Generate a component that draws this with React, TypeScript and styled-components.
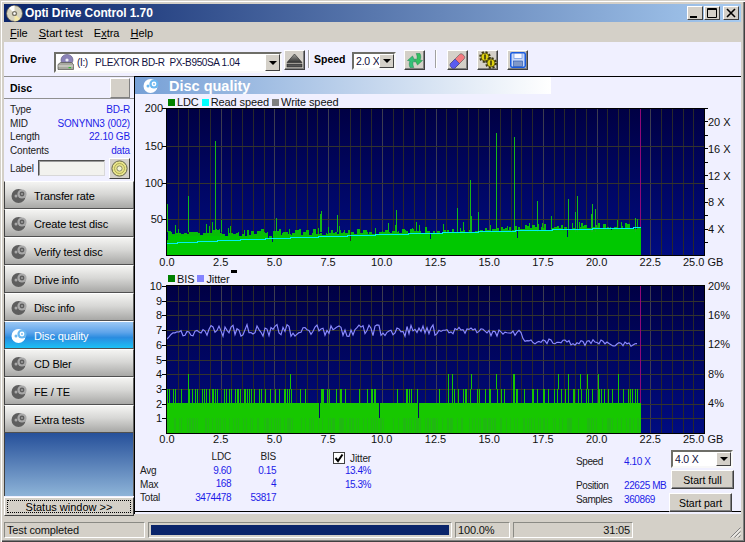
import React from "react";
import styled, { createGlobalStyle } from "styled-components";

const GlobalStyle = createGlobalStyle`
  html, body {
    margin: 0;
    padding: 0;
    background: #d4d0c8;
  }
  * {
    box-sizing: border-box;
  }
`;

const FONT = `"Liberation Sans", Arial, sans-serif`;
const PANEL = "#f0f0ff";
const FACE = "#d4d0c8";
const VALUE_BLUE = "#1c1ce8";

const seeded = (start: number) => {
    let seed = start;
    return () => {
        seed = (seed * 16807) % 2147483647;
        return seed / 2147483647;
    };
};

const PLOT_LEFT = 167;
const PLOT_RIGHT = 704;
const DATA_END = 641;
const GB_PX = (PLOT_RIGHT - PLOT_LEFT) / 25;

// ---- LDC data, page coordinates
const LDC_SPIKES: [number, number][] = [
    [167, 204], [188, 196], [215, 141], [221, 220], [276, 218], [320, 214], [321, 211], [337, 215],
    [396, 210], [388, 223], [457, 208], [470, 180], [471, 216], [478, 212], [496, 133], [514, 137],
    [537, 201], [568, 199], [577, 196], [575, 212], [592, 204], [595, 209], [591, 214], [635, 218],
];

const READ_SPEED: [number, number][] = [
    [167, 243], [177, 242], [197, 241], [217, 240], [240, 239], [265, 238], [290, 237], [318, 236],
    [347, 235], [375, 234], [408, 233], [442, 232], [478, 231], [515, 230], [552, 229], [592, 228], [633, 227],
];

const buildLdc = () => {
    const rand = seeded(4711);
    let base = "";
    let rough = "";
    let x = PLOT_LEFT;
    while (x < DATA_END) {
        const t = (x - PLOT_LEFT) / (DATA_END - PLOT_LEFT);
        const baseTop = Math.round(t < 0.35 ? 236 : 236 - (t - 0.35) * 11);
        const r = rand();
        const v = rand();
        if (r < 0.04) {
            // a single dark gap in the fill
            base += `M${x + 0.5} ${baseTop + 1 + Math.round(v * 5)}V255`;
            x++;
            continue;
        }
        const run = 1 + Math.floor(rand() * 3);
        const tall = r > 0.82 ? 16 : 7;
        const top = baseTop - Math.round(v * tall);
        for (let i = 0; i < run && x < DATA_END; i++, x++) {
            base += `M${x + 0.5} ${baseTop}V255`;
            rough += `M${x + 0.5} ${i === 0 || tall < 16 ? top : baseTop - 3}V${baseTop}`;
        }
    }
    const spikes = LDC_SPIKES.map(([sx, y]) => `M${sx + 0.5} ${y}V232`).join("");
    return {base, rough, spikes};
};

const speedLine = () => {
    let d = `M${READ_SPEED[0][0]} ${READ_SPEED[0][1]}`;
    READ_SPEED.forEach(([x, y]) => {
        d += `H${x}V${y}`;
    });
    return d + `H${DATA_END}`;
};

// ---- BIS and jitter data
const BIS_3_LEFT = [112, 118, 130, 136, 152, 175, 178, 185, 196, 200, 216, 222, 228, 238, 246, 250, 255, 262, 283, 288, 298, 304, 316, 320, 324, 330, 342, 346, 352, 358, 364, 372, 388, 392, 406, 420, 434, 446, 462, 466, 470, 478, 482, 510, 526, 572, 576, 580, 590, 596, 618, 630, 634, 644, 686, 712, 722, 726, 732, 736, 802, 828, 832, 838, 842, 862];
const BIS_3_RIGHT = [28, 55, 65, 72, 85, 100, 104, 108, 120, 142, 148, 165, 178, 180, 200, 212, 222, 248, 252, 258, 262, 282, 305, 310, 322, 338, 342, 355, 372, 380, 392, 405, 415, 428, 432, 445, 452, 468, 475, 485, 503, 508, 513, 522, 535, 545, 565, 578, 595, 600, 605, 615, 622];
const BIS_4 = [...[175, 481].map(z => 130 + z / 3), ...[55, 65, 122, 199, 250, 253, 385, 415, 451, 472, 505, 565].map(z => 430 + z / 3)];
const BIS_NOTCH = [568, 748, 865].map(z => 130 + z / 3);

const buildBis = () => {
    const rand = seeded(99);
    const three = [...BIS_3_LEFT.map(z => 130 + z / 3), ...BIS_3_RIGHT.map(z => 430 + z / 3)]
        .map(x => `M${Math.round(x) + 0.5} 389V404`).join("");
    const four = BIS_4.map(x => `M${Math.round(x) + 0.5} 374V389`).join("");
    const notches = BIS_NOTCH.map(x => `M${Math.round(x) + 0.5} 403V418`).join("");
    let stripes = "";
    for (let x = PLOT_LEFT; x < DATA_END; x++) {
        if (rand() < 0.35) stripes += `M${x + 0.5} 418V433`;
    }
    return {three, four, notches, stripes};
};

const jitterLine = () => {
    const rand = seeded(2024);
    let d = "";
    for (let x = PLOT_LEFT; x < 639; x += 2) {
        let center: number;
        let amp: number;
        if (x < 172) {
            center = 340 - (x - PLOT_LEFT) * 1.3;
            amp = 1;
        } else if (x < 210) {
            center = 334 - (x - 172) * 0.05;
            amp = 3;
        } else if (x < 523) {
            center = 330.5 + (x > 440 ? (x - 440) * 0.03 : 0);
            amp = x > 440 ? 4 : 6;
        } else {
            center = 341 + (x - 523) * 0.024;
            amp = 3;
        }
        const y = center + (rand() * 2 - 1) * amp;
        d += `${d ? "L" : "M"}${x} ${y.toFixed(1)}`;
    }
    return d;
};

const LDC = buildLdc();
const BIS = buildBis();
const SPEED_PATH = speedLine();
const JITTER_PATH = jitterLine();

// ---- chart drawing
type PlotProps = {
    id: string;
    top: number;
    bottom: number;
    rows: number[];
    labelY: number;
    children: React.ReactNode;
};

const X_LABELS = ["0.0", "2.5", "5.0", "7.5", "10.0", "12.5", "15.0", "17.5", "20.0", "22.5"];

function Plot({id, top, bottom, rows, labelY, children}: PlotProps) {
    const columns = Array.from({length: 49}, (_, i) => Math.round(PLOT_LEFT + (i + 1) * GB_PX / 2));
    return (
        <>
            <defs>
                <linearGradient id={id} x1="0" y1="0" x2="0" y2="1">
                    <stop offset="0" stopColor="#000044"/>
                    <stop offset="1" stopColor="#000c80"/>
                </linearGradient>
            </defs>
            <rect x={PLOT_LEFT} y={top} width={PLOT_RIGHT - PLOT_LEFT} height={bottom - top} fill={`url(#${id})`}/>
            {columns.map((x, i) => (
                <path key={x} d={`M${x + 0.5} ${top}V${bottom}`} stroke={(i + 1) % 5 === 0 ? "#3c3c50" : "#28282c"}/>
            ))}
            {rows.map(y => (
                <path key={y} d={`M${PLOT_LEFT} ${y + 0.5}H${PLOT_RIGHT}`} stroke="#33332e"/>
            ))}
            <path d={`M640.5 ${top}V${bottom}`} stroke="#900878"/>
            {children}
            <path d={`M166.5 ${top - 0.5}H704.5V${bottom + 0.5}H166.5Z`} fill="none" stroke="#000"/>
            {X_LABELS.map((label, i) => (
                <text key={label} x={PLOT_LEFT + i * 2.5 * GB_PX} y={labelY} textAnchor="middle">{label}</text>
            ))}
            <text x={PLOT_RIGHT - 21} y={labelY}>25.0 GB</text>
        </>
    );
}

function LdcPlot() {
    const ticks = [[200, 108], [150, 146], [100, 183], [50, 219]];
    const speeds = [[20, 122], [16, 149], [12, 176], [8, 202], [4, 229]];
    const minor = Array.from({length: 11}, (_, i) => 242 - i * 13.4);
    return (
        <ChartSvg width={606} height={162} viewBox="135 108 606 162">
            <Plot id="ldcBack" top={109} bottom={255} rows={[146, 183, 219]} labelY={266}>
                <path d={LDC.base} stroke="#00c800"/>
                <path d={LDC.rough} stroke="#08bc08"/>
                <path d={LDC.spikes} stroke="#16b816"/>
                <path d={SPEED_PATH} fill="none" stroke="#00f0f0" strokeWidth={1}/>
            </Plot>
            {ticks.map(([value, y]) => (
                <g key={value}>
                    <path d={`M162 ${y + 0.5}H167`} stroke="#000"/>
                    <text x={163} y={y + 4} textAnchor="end">{value}</text>
                </g>
            ))}
            {minor.map(y => (
                <path key={y} d={`M704 ${Math.round(y) + 0.5}H708`} stroke="#000"/>
            ))}
            {speeds.map(([value, y]) => (
                <text key={value} x={708} y={y + 4}>{value} X</text>
            ))}
        </ChartSvg>
    );
}

function BisPlot() {
    const levels = [10, 9, 8, 7, 6, 5, 4, 3, 2, 1];
    const levelY = (value: number) => Math.round(286 + (10 - value) * 14.7);
    const percents = [[20, 286], [16, 315], [12, 344], [8, 374], [4, 403]];
    return (
        <ChartSvg width={606} height={161} viewBox="135 285 606 161">
            <Plot id="bisBack" top={286} bottom={433} rows={levels.slice(1).map(levelY)} labelY={443}>
                <rect x={PLOT_LEFT} y={403} width={DATA_END - PLOT_LEFT} height={30} fill="#17c800"/>
                <path d={BIS.stripes} stroke="#20b812"/>
                <path d={BIS.three} stroke="#18c400"/>
                <path d={BIS.four} stroke="#18c400"/>
                <path d={BIS.notches} stroke="#08086a"/>
                <path d={JITTER_PATH} fill="none" stroke="#8c8cff" strokeWidth={1.15} shapeRendering="auto"/>
            </Plot>
            {levels.map(value => (
                <g key={value}>
                    <path d={`M162 ${levelY(value) + 0.5}H167`} stroke="#000"/>
                    <text x={162} y={levelY(value) + 4} textAnchor="end">{value}</text>
                </g>
            ))}
            {percents.map(([value, y]) => (
                <text key={value} x={708} y={y + 4}>{value}%</text>
            ))}
        </ChartSvg>
    );
}

// ---- icons
function AppDisc() {
    return (
        <svg width="17" height="17" viewBox="0 0 17 17">
            <circle cx="8.5" cy="8.5" r="8" fill="#d8d4c0" stroke="#5a5648" strokeWidth="0.8"/>
            <path d="M8.5 8.5L3 3A8 8 0 0 1 8.5 .5Z" fill="#fff"/>
            <path d="M8.5 8.5L14 14A8 8 0 0 1 8.5 16.5Z" fill="#f4e8a8"/>
            <circle cx="8.5" cy="8.5" r="2.6" fill="#7a7668"/>
            <circle cx="8.5" cy="8.5" r="1.2" fill="#fff"/>
        </svg>
    );
}

function DriveGlyph() {
    return (
        <svg width="17" height="17" viewBox="0 0 17 17">
            <ellipse cx="10" cy="6" rx="6" ry="5.6" fill="#8a82b8" stroke="#5c5880" strokeWidth="0.6"/>
            <circle cx="10" cy="6" r="1.6" fill="#eeeef8"/>
            <path d="M1 10.5L3.5 8.5H14.5L16.5 10.5V15.5H1Z" fill="#a8a8a0" stroke="#55554f" strokeWidth="0.7"/>
            <path d="M1.4 12H16.2" stroke="#e0e0d8"/>
            <rect x="11.5" y="13" width="2.5" height="1.2" fill="#30c030"/>
        </svg>
    );
}

function EjectGlyph() {
    return (
        <svg width="17" height="15" viewBox="0 0 17 15">
            <defs>
                <linearGradient id="ejectFill" x1="0" y1="0" x2="0" y2="1">
                    <stop offset="0" stopColor="#a0a09a"/>
                    <stop offset="1" stopColor="#303030"/>
                </linearGradient>
            </defs>
            <path d="M8.5 1L16 9.5H1Z" fill="url(#ejectFill)" stroke="#222" strokeWidth="0.6"/>
            <rect x="1" y="11" width="15" height="3" fill="#555" stroke="#222" strokeWidth="0.6"/>
        </svg>
    );
}

function RefreshGlyph() {
    return (
        <svg width="18" height="17" viewBox="0 0 18 17">
            <path d="M4 15.5C3 13 3 11 4 9L1.5 8.5L6.5 4L9.5 10L7.2 9.6C6.6 11.5 6.8 13.5 7.8 15.5Z" fill="#34c078" stroke="#1c8050" strokeWidth="0.5"/>
            <path d="M14 1.5C15 4 15 6 14 8L16.5 8.5L11.5 13L8.5 7L10.8 7.4C11.4 5.5 11.2 3.5 10.2 1.5Z" fill="#34c060" stroke="#1c8050" strokeWidth="0.5"/>
        </svg>
    );
}

function EraserGlyph() {
    return (
        <svg width="17" height="17" viewBox="0 0 17 17">
            <path d="M1.5 11.5L10.5 2.5C11.5 1.5 12.8 1.5 13.8 2.5L15 3.7C16 4.7 16 6 15 7L6 16C5 16.8 4 16.8 3 16Z" fill="#f47a80" stroke="#555" strokeWidth="0.6"/>
            <path d="M1.5 11.5L6 7L10.5 11.5L6 16C5 16.8 4 16.8 3 16L1.5 14.5C.8 13.6 .8 12.3 1.5 11.5Z" fill="#5a5cf0" stroke="#404080" strokeWidth="0.6"/>
        </svg>
    );
}

function GearsGlyph() {
    return (
        <svg width="18" height="18" viewBox="0 0 18 18">
            <circle cx="6" cy="6" r="4.6" fill="none" stroke="#3c3810" strokeWidth="2.6" strokeDasharray="2 1.6"/>
            <circle cx="6" cy="6" r="4" fill="#dcd010" stroke="#3c3810" strokeWidth="0.7"/>
            <rect x="5.2" y="3.5" width="1.6" height="5" fill="#3c3810"/>
            <circle cx="12" cy="12" r="4.6" fill="none" stroke="#3c3810" strokeWidth="2.6" strokeDasharray="2 1.6"/>
            <circle cx="12" cy="12" r="4" fill="#dcd010" stroke="#3c3810" strokeWidth="0.7"/>
            <rect x="11.2" y="9.5" width="1.6" height="5" fill="#3c3810"/>
        </svg>
    );
}

function SaveGlyph() {
    return (
        <svg width="16" height="16" viewBox="0 0 16 16">
            <rect x=".75" y=".75" width="14.5" height="14.5" rx="1.5" fill="#c8d8f8" stroke="#1a5ce0" strokeWidth="1.5"/>
            <rect x="4" y="1.5" width="8" height="5" fill="#f8f8ff" stroke="#5080d8" strokeWidth="0.6"/>
            <rect x="3.5" y="9" width="9" height="5.5" fill="#8098c8" stroke="#2050b0" strokeWidth="0.6"/>
        </svg>
    );
}

function YellowDisc() {
    return (
        <svg width="17" height="17" viewBox="0 0 17 17">
            <circle cx="8.5" cy="8.5" r="7.6" fill="#e8e48c" stroke="#66664a"/>
            <circle cx="8.5" cy="8.5" r="5" fill="none" stroke="#b0ac50"/>
            <circle cx="8.5" cy="8.5" r="2.6" fill="#f4f4d0" stroke="#66664a" strokeWidth="0.7"/>
        </svg>
    );
}

function NavDisc({$active}: {$active?: boolean}) {
    const dark = $active ? "#ffffff" : "#5e5e5e";
    const light = $active ? "#6cb8f0" : "#a8a8a8";
    return (
        <svg width="17" height="17" viewBox="0 0 17 17">
            <circle cx="7.5" cy="9" r="7" fill={dark}/>
            <circle cx="11" cy="7" r="4.6" fill={light}/>
            <circle cx="11" cy="7" r="2.4" fill={dark}/>
            <circle cx="11" cy="7" r="0.9" fill={light}/>
            <circle cx="5" cy="9" r="1.5" fill={light}/>
        </svg>
    );
}

// ---- content
const NAV_ITEMS = ["Transfer rate", "Create test disc", "Verify test disc", "Drive info", "Disc info", "Disc quality", "CD Bler", "FE / TE", "Extra tests"];

const DISC_INFO = [
    ["Type", "BD-R"],
    ["MID", "SONYNN3 (002)"],
    ["Length", "22.10 GB"],
    ["Contents", "data"],
];

export default function App() {
    return (
        <Window>
            <GlobalStyle/>
            <TitleBar>
                <AppDisc/>
                <TitleText>Opti Drive Control 1.70</TitleText>
                <CaptionButtons>
                    <CaptionButton aria-label="Minimize">
                        <svg width="14" height="12" viewBox="0 0 14 12"><rect x="2" y="9" width="7" height="2" fill="#000"/></svg>
                    </CaptionButton>
                    <CaptionButton aria-label="Maximize">
                        <svg width="14" height="12" viewBox="0 0 14 12"><path d="M2.5 1.5H11.5V10.5H2.5ZM2 2.5H12" fill="none" stroke="#000"/></svg>
                    </CaptionButton>
                    <CaptionButton $ml={2} aria-label="Close">
                        <svg width="14" height="12" viewBox="0 0 14 12"><path d="M3 2L11 10M11 2L3 10" fill="none" stroke="#000" strokeWidth="1.6"/></svg>
                    </CaptionButton>
                </CaptionButtons>
            </TitleBar>

            <MenuBar>
                <MenuItem><u>F</u>ile</MenuItem>
                <MenuItem><u>S</u>tart test</MenuItem>
                <MenuItem>E<u>x</u>tra</MenuItem>
                <MenuItem><u>H</u>elp</MenuItem>
            </MenuBar>

            <Toolbar>
                <ToolLabel $width={44}>Drive</ToolLabel>
                <Combo $width={228} $height={21} $mt={2}>
                    <ComboIcon><DriveGlyph/></ComboIcon>
                    <DriveText>{"(I:)   PLEXTOR BD-R  PX-B950SA 1.04"}</DriveText>
                    <ComboArrow/>
                </Combo>
                <ToolButton $ml={2} aria-label="Eject"><EjectGlyph/></ToolButton>
                <ToolDivider $ml={3}/>
                <ToolLabel $width={38} $ml={5}>Speed</ToolLabel>
                <Combo $width={44} $height={18} $mt={2}>
                    <ComboText>2.0 X</ComboText>
                    <ComboArrow/>
                </Combo>
                <ToolButton $ml={8} aria-label="Refresh"><RefreshGlyph/></ToolButton>
                <ToolDivider $ml={10}/>
                <ToolButton $ml={11} aria-label="Erase"><EraserGlyph/></ToolButton>
                <ToolButton $ml={9} aria-label="Settings"><GearsGlyph/></ToolButton>
                <ToolButton $ml={9} aria-label="Save"><SaveGlyph/></ToolButton>
            </Toolbar>

            <Body>
                <Sidebar>
                    <DiscHeader>
                        <DiscTitle>Disc</DiscTitle>
                        <DiscToggle aria-label="Toggle disc panel"/>
                    </DiscHeader>
                    <InfoList>
                        {DISC_INFO.map(([name, value]) => (
                            <InfoRow key={name}>
                                <span>{name}</span>
                                <InfoValue>{value}</InfoValue>
                            </InfoRow>
                        ))}
                        <LabelRow>
                            <LabelName>Label</LabelName>
                            <LabelInput/>
                            <LabelButton aria-label="Read label"><YellowDisc/></LabelButton>
                        </LabelRow>
                    </InfoList>
                    <NavList>
                        {NAV_ITEMS.map(item => (
                            <NavButton key={item} $active={item === "Disc quality"}>
                                <NavDisc $active={item === "Disc quality"}/>
                                {item}
                            </NavButton>
                        ))}
                    </NavList>
                    <SideFill/>
                    <StatusToggle><StatusFocus>{"Status window >>"}</StatusFocus></StatusToggle>
                </Sidebar>

                <Main>
                    <Banner>
                        <NavDisc $active/>
                        <BannerText>Disc quality</BannerText>
                    </Banner>
                    <Legend>
                        <Swatch $color="#008000"/>LDC
                        <Swatch $color="#00ffff" $ml={3}/>Read speed
                        <Swatch $color="#808080" $ml={3}/>Write speed
                    </Legend>
                    <LdcPlot/>
                    <Legend $tall>
                        <Swatch $color="#008000"/>BIS
                        <Swatch $color="#8484ff" $ml={3}/>Jitter
                        <LegendMark/>
                    </Legend>
                    <BisPlot/>

                    <StatsArea>
                        <StatsGrid>
                            <span/>
                            <StatHead>LDC</StatHead>
                            <StatHead>BIS</StatHead>
                            <span>Avg</span>
                            <StatValue>9.60</StatValue>
                            <StatValue>0.15</StatValue>
                            <span>Max</span>
                            <StatValue>168</StatValue>
                            <StatValue>4</StatValue>
                            <span>Total</span>
                            <StatValue>3474478</StatValue>
                            <StatValue>53817</StatValue>
                        </StatsGrid>
                        <JitterColumn>
                            <JitterHead>
                                <CheckBox>
                                    <svg width="10" height="10" viewBox="0 0 10 10"><path d="M1.5 5L4 8L8.5 1.5" fill="none" stroke="#000" strokeWidth="2"/></svg>
                                </CheckBox>
                                <span>Jitter</span>
                            </JitterHead>
                            <StatValue>13.4%</StatValue>
                            <StatValue>15.3%</StatValue>
                        </JitterColumn>
                        <ProgressGrid>
                            <span>Speed</span>
                            <ProgressValue>4.10 X</ProgressValue>
                            <span/>
                            <span/>
                            <span>Position</span>
                            <ProgressValue>22625 MB</ProgressValue>
                            <span>Samples</span>
                            <ProgressValue>360869</ProgressValue>
                        </ProgressGrid>
                        <ControlColumn>
                            <Combo $width={62} $height={18}>
                                <ComboText>4.0 X</ComboText>
                                <ComboArrow/>
                            </Combo>
                            <StartButton $top={2}>Start full</StartButton>
                            <StartButton $top={4} $shift={-2}>Start part</StartButton>
                        </ControlColumn>
                    </StatsArea>
                </Main>
            </Body>

            <StatusBar>
                <StatusCell $width={141}>Test completed</StatusCell>
                <ProgressCell><ProgressFill/></ProgressCell>
                <StatusCell $width={55}>100.0%</StatusCell>
                <StatusCell $width={120} $right>31:05</StatusCell>
                <Grip>
                    <svg width="12" height="12" viewBox="0 0 12 12">
                        <path d="M11.5 1.5L1.5 11.5M11.5 5.5L5.5 11.5M11.5 9.5L9.5 11.5" stroke="#808080" fill="none"/>
                        <path d="M11.5 3L3 11.5M11.5 7L7 11.5" stroke="#fff" fill="none"/>
                    </svg>
                </Grip>
            </StatusBar>
        </Window>
    );
}

// ---- styles
const Window = styled.div`
  width: 745px;
  height: 542px;
  padding: 4px;
  display: flex;
  flex-direction: column;
  overflow: hidden;
  background: ${FACE};
  font: 11px ${FONT};
  color: #000;
  box-shadow: inset 1px 1px 0 ${FACE}, inset 2px 2px 0 #fff, inset -1px -1px 0 #404040, inset -2px -2px 0 #808080;
`;

const TitleBar = styled.div`
  height: 18px;
  flex: none;
  display: flex;
  align-items: center;
  padding-left: 2px;
  background: linear-gradient(90deg, #0a246a, #a6caf0);
`;

const TitleText = styled.span`
  margin-left: 2px;
  font-size: 12px;
  font-weight: bold;
  letter-spacing: -0.1px;
  color: #fff;
  white-space: nowrap;
`;

const CaptionButtons = styled.div`
  margin-left: auto;
  margin-right: 2px;
  display: flex;
  gap: 1px;
`;

const CaptionButton = styled.button<{ $ml?: number }>`
  width: 16px;
  height: 14px;
  padding: 0;
  margin-left: ${p => p.$ml ?? 0}px;
  display: flex;
  align-items: center;
  justify-content: center;
  background: ${FACE};
  border: 1px solid;
  border-color: #fff #404040 #404040 #fff;
`;

const MenuBar = styled.div`
  height: 20px;
  flex: none;
  display: flex;
  align-items: center;
  padding-left: 6px;
  gap: 11px;
  font-size: 11px;
  background: ${FACE};
`;

const MenuItem = styled.span`
  padding-top: 1px;
  white-space: nowrap;
`;

const Toolbar = styled.div`
  height: 34px;
  flex: none;
  display: flex;
  align-items: flex-start;
  padding: 8px 0 0 6px;
  background: ${PANEL};
`;

const ToolLabel = styled.span<{ $width: number; $ml?: number }>`
  width: ${p => p.$width}px;
  margin-left: ${p => p.$ml ?? 0}px;
  font-size: 10.5px;
  line-height: 19px;
  font-weight: bold;
`;

const ToolDivider = styled.span<{ $ml: number }>`
  width: 1px;
  height: 18px;
  margin-left: ${p => p.$ml}px;
  background: #a0a0a0;
  box-shadow: 1px 0 0 #fff;
`;

const ToolButton = styled.button<{ $ml: number }>`
  width: 21px;
  height: 20px;
  flex: none;
  padding: 0;
  margin-left: ${p => p.$ml}px;
  display: flex;
  align-items: center;
  justify-content: center;
  background: ${FACE};
  border: 1px solid;
  border-color: #fff #404040 #404040 #fff;
  box-shadow: inset -1px -1px 0 #808080;
`;

const Combo = styled.div<{ $width: number; $height: number; $mt?: number }>`
  width: ${p => p.$width}px;
  height: ${p => p.$height}px;
  flex: none;
  margin-top: ${p => p.$mt ?? 0}px;
  display: flex;
  align-items: center;
  background: #fff;
  border: 2px solid;
  border-color: #6e6e68 #f8f8f8 #f8f8f8 #6e6e68;
`;

const ComboIcon = styled.span`
  display: flex;
  margin-left: 1px;
`;

const ComboText = styled.span`
  flex: 1;
  padding-left: 2px;
  font-size: 10.5px;
  letter-spacing: -0.2px;
  white-space: pre;
  overflow: hidden;
  color: #101040;
`;

const DriveText = styled(ComboText)`
  padding-left: 3px;
  font-size: 10px;
  letter-spacing: -0.35px;
`;

const ComboArrow = styled.span`
  width: 15px;
  align-self: stretch;
  flex: none;
  position: relative;
  background: ${FACE};
  border: 1px solid;
  border-color: #fff #404040 #404040 #fff;

  &::after {
    content: "";
    position: absolute;
    left: 3px;
    top: 50%;
    margin-top: -2px;
    border: 4px solid transparent;
    border-top-color: #000;
    border-bottom: 0;
  }
`;

const Body = styled.div`
  height: 438px;
  flex: none;
  display: flex;
  background: ${PANEL};
`;

const Sidebar = styled.div`
  width: 130px;
  flex: none;
  display: flex;
  flex-direction: column;
`;

const DiscHeader = styled.div`
  height: 23px;
  flex: none;
  display: flex;
  align-items: center;
  justify-content: space-between;
  padding: 0 4px 0 6px;
  border-top: 1px solid #909090;
  border-bottom: 1px solid #909090;
`;

const DiscTitle = styled.span`
  font-size: 10.5px;
  font-weight: bold;
`;

const DiscToggle = styled.button`
  width: 20px;
  height: 20px;
  padding: 0;
  background: ${FACE};
  border: 1px solid;
  border-color: #fff #808080 #808080 #fff;
`;

const InfoList = styled.div`
  height: 82px;
  flex: none;
  padding: 3.5px 4px 0 6px;
  font-size: 10px;
  letter-spacing: -0.15px;
  color: #202020;
`;

const InfoRow = styled.div`
  height: 13.7px;
  display: flex;
  align-items: center;
  justify-content: space-between;
  white-space: nowrap;
`;

const InfoValue = styled.span`
  color: ${VALUE_BLUE};
`;

const LabelRow = styled.div`
  display: flex;
  align-items: center;
  margin-top: 0.5px;
`;

const LabelName = styled.span`
  width: 28px;
  flex: none;
`;

const LabelInput = styled.div`
  width: 67px;
  height: 16px;
  background: #f2f2ee;
  border: 1px solid;
  border-color: #505050 #d8d8d8 #d8d8d8 #505050;
  box-shadow: inset 1px 1px 0 #9a9a9a;
`;

const LabelButton = styled.button`
  width: 21px;
  height: 21px;
  margin-left: 4px;
  padding: 0;
  display: flex;
  align-items: center;
  justify-content: center;
  background: ${FACE};
  border: 1px solid;
  border-color: #fff #404040 #404040 #fff;
`;

const NavList = styled.div`
  flex: none;
  display: flex;
  flex-direction: column;
`;

const NavButton = styled.button<{ $active?: boolean }>`
  width: 130px;
  height: 28px;
  padding: 1px 0 0 6px;
  display: flex;
  align-items: center;
  gap: 6px;
  font: 11px ${FONT};
  letter-spacing: -0.15px;
  text-align: left;
  color: ${p => (p.$active ? "#fff" : "#000")};
  background: ${p => (p.$active
        ? "linear-gradient(180deg, #9cc8f4 0%, #5ea4ea 40%, #2a8ce0 60%, #1cc0f4 100%)"
        : "linear-gradient(180deg, #f4f4f2 0%, #d8d8d6 45%, #a8a8a6 100%)")};
  border: 0;
  border-left: 1px solid #404040;
  border-right: 1px solid #606060;
  border-bottom: 1px solid #505050;
  border-top: 1px solid #fff;
`;

const SideFill = styled.div`
  height: 63px;
  flex: none;
  background: linear-gradient(180deg, #26509a, #8eb4d8);
  border-left: 1px solid #404040;
  border-right: 1px solid #606060;
`;

const StatusToggle = styled.button`
  height: 19px;
  flex: none;
  margin-top: 1px;
  padding: 2px;
  background: ${FACE};
  border: 1px solid;
  border-color: #fff #404040 #404040 #fff;
  font: 11px ${FONT};
`;

const StatusFocus = styled.span`
  display: block;
  height: 100%;
  line-height: 12px;
  border: 1px dotted #000;
`;

const Main = styled.div`
  width: 607px;
  flex: none;
  border-top: 1px solid #000;
  border-left: 1px solid #000;
  display: flex;
  flex-direction: column;
`;

const Banner = styled.div`
  width: 416px;
  height: 17px;
  flex: none;
  display: flex;
  align-items: center;
  gap: 9px;
  padding-left: 8px;
  background: linear-gradient(90deg, #76a0d6, #fff);
`;

const BannerText = styled.span`
  font-size: 14.5px;
  font-weight: bold;
  color: #fff;
`;

const Legend = styled.div<{ $tall?: boolean }>`
  height: ${p => (p.$tall ? 15 : 14)}px;
  flex: none;
  position: relative;
  display: flex;
  align-items: center;
  padding: 2px 0 0 33px;
  letter-spacing: -0.1px;
  color: #101010;
`;

const Swatch = styled.span<{ $color: string; $ml?: number }>`
  width: 7px;
  height: 7px;
  margin-left: ${p => p.$ml ?? 0}px;
  margin-right: 2px;
  background: ${p => p.$color};
`;

const LegendMark = styled.span`
  position: absolute;
  left: 96px;
  top: 0;
  width: 6px;
  height: 3px;
  background: #000;
`;

const ChartSvg = styled.svg`
  display: block;
  flex: none;
  overflow: visible;
  shape-rendering: crispEdges;

  text {
    font: 11px ${FONT};
    fill: #101010;
    shape-rendering: auto;
  }
`;

const StatsArea = styled.div`
  height: 66px;
  flex: none;
  display: flex;
  font-size: 10px;
  letter-spacing: -0.4px;
  border-bottom: 1px solid #000;
`;

const StatsGrid = styled.div`
  width: 136px;
  margin-left: 5px;
  padding-top: 4px;
  display: grid;
  grid-template-columns: 50px 41px 45px;
  grid-auto-rows: 13.7px;
  align-items: center;
  letter-spacing: -0.2px;
  color: #202020;
`;

const StatHead = styled.span`
  text-align: right;
`;

const StatValue = styled.span`
  line-height: 13.7px;
  text-align: right;
  letter-spacing: -0.45px;
  color: ${VALUE_BLUE};
`;

const JitterColumn = styled.div`
  width: 38px;
  margin-left: 57px;
  padding-top: 6px;
  display: flex;
  flex-direction: column;
`;

const JitterHead = styled.div`
  height: 12px;
  display: flex;
  align-items: center;
  gap: 5px;
  letter-spacing: -0.1px;
  color: #202020;
`;

const CheckBox = styled.span`
  width: 12px;
  height: 12px;
  flex: none;
  display: flex;
  align-items: center;
  justify-content: center;
  background: #fff;
  border: 1px solid #404040;
`;

const ProgressGrid = styled.div`
  width: 95px;
  margin-left: 205px;
  padding-top: 8px;
  display: grid;
  grid-template-columns: 48px 47px;
  grid-template-rows: 14px 10px 14px 14px;
  align-items: center;
  white-space: nowrap;
  color: #202020;
`;

const ProgressValue = styled.span`
  color: ${VALUE_BLUE};
`;

const ControlColumn = styled.div`
  width: 65px;
  padding-top: 4px;
  display: flex;
  flex-direction: column;
  letter-spacing: 0;
`;

const StartButton = styled.button<{ $top: number; $shift?: number }>`
  width: 63px;
  height: 19px;
  flex: none;
  margin-top: ${p => p.$top}px;
  margin-left: ${p => p.$shift ?? 0}px;
  padding: 0;
  font: 10.5px ${FONT};
  background: ${FACE};
  border: 1px solid;
  border-color: #fff #404040 #404040 #fff;
  box-shadow: inset -1px -1px 0 #808080;
`;

const StatusBar = styled.div`
  height: 16px;
  flex: none;
  margin-top: 8px;
  display: flex;
  gap: 3px;
  background: ${FACE};
`;

const StatusCell = styled.div<{ $width: number; $right?: boolean }>`
  width: ${p => p.$width}px;
  flex: none;
  padding: 0 2px;
  font-size: 11px;
  letter-spacing: -0.15px;
  line-height: 15px;
  text-align: ${p => (p.$right ? "right" : "left")};
  color: #101010;
  border: 1px solid;
  border-color: #8a8a84 #fff #fff #8a8a84;
  white-space: nowrap;
`;

const ProgressCell = styled.div`
  width: 304px;
  flex: none;
  padding: 2px;
  border: 1px solid;
  border-color: #8a8a84 #fff #fff #8a8a84;
`;

const ProgressFill = styled.div`
  height: 100%;
  background: #0a246a;
`;

const Grip = styled.div`
  flex: 1;
  display: flex;
  align-items: flex-end;
  justify-content: flex-end;
`;
